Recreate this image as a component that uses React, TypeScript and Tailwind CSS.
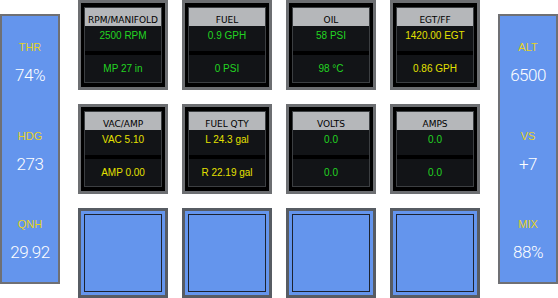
import React from "react";

type Gauge = { title: string; top: string; bottom: string; color: "green" | "yellow" };

const gauges: Gauge[] = [
  { title: "RPM/MANIFOLD", top: "2500 RPM", bottom: "MP 27 in", color: "green" },
  { title: "FUEL", top: "0.9 GPH", bottom: "0 PSI", color: "green" },
  { title: "OIL", top: "58 PSI", bottom: "98 °C", color: "green" },
  { title: "EGT/FF", top: "1420.00 EGT", bottom: "0.86 GPH", color: "yellow" },
  { title: "VAC/AMP", top: "VAC 5.10", bottom: "AMP 0.00", color: "yellow" },
  { title: "FUEL QTY", top: "L 24.3 gal", bottom: "R 22.19 gal", color: "yellow" },
  { title: "VOLTS", top: "0.0", bottom: "0.0", color: "green" },
  { title: "AMPS", top: "0.0", bottom: "0.0", color: "green" },
];

function SidePanel({ items }: { items: { label: string; value: string }[] }) {
  return (
    <div className="flex h-[270px] w-[60px] flex-col border-2 border-[#6f7074] bg-[#6495ed]">
      {items.map((item) => (
        <div key={item.label} className="flex flex-1 flex-col items-center justify-center gap-[14px] pt-[5px]">
          <span className="text-[11px] leading-none text-[#e6d21e]">{item.label}</span>
          <span className="font-['Roboto',sans-serif] text-[17px] font-light leading-none tracking-[-0.5px] text-white">
            {item.value}
          </span>
        </div>
      ))}
    </div>
  );
}

function GaugeCard({ g }: { g: Gauge }) {
  const color = g.color === "green" ? "text-[#22d422]" : "text-[#e4e000]";
  return (
    <div className="h-[90px] w-[90px] border-[3px] border-[#6d6f72] bg-black px-[3px] py-[4px]">
      <div className="flex h-full flex-col border border-[#3c3f42]">
        <div className="flex h-[18px] items-end justify-center bg-[#b5b7ba] pb-[1px] font-['DejaVu_Sans',sans-serif] text-[9px] leading-none text-black">
          {g.title}
        </div>
        <div className={`flex h-[25px] justify-center bg-[#121417] pt-[5px] text-[10px] leading-none ${color}`}>
          {g.top}
        </div>
        <div className="h-[4px] bg-black" />
        <div className={`flex flex-1 items-center justify-center bg-[#121417] text-[10px] leading-none ${color}`}>
          {g.bottom}
        </div>
      </div>
    </div>
  );
}

function BlankCard() {
  return (
    <div className="h-[90px] w-[90px] border-[3px] border-[#575c63] bg-[#6495ed] p-[3px]">
      <div className="h-full border border-[#1c2330]" />
    </div>
  );
}

export default function App() {
  return (
    <div className="flex h-[298px] w-[558px] items-center justify-between bg-white font-['Liberation_Sans',sans-serif]">
      <SidePanel
        items={[
          { label: "THR", value: "74%" },
          { label: "HDG", value: "273" },
          { label: "QNH", value: "29.92" },
        ]}
      />
      <div className="grid grid-cols-4 gap-[14px]">
        {gauges.map((g) => (
          <GaugeCard key={g.title} g={g} />
        ))}
        {[0, 1, 2, 3].map((i) => (
          <BlankCard key={i} />
        ))}
      </div>
      <SidePanel
        items={[
          { label: "ALT", value: "6500" },
          { label: "VS", value: "+7" },
          { label: "MIX", value: "88%" },
        ]}
      />
    </div>
  );
}
